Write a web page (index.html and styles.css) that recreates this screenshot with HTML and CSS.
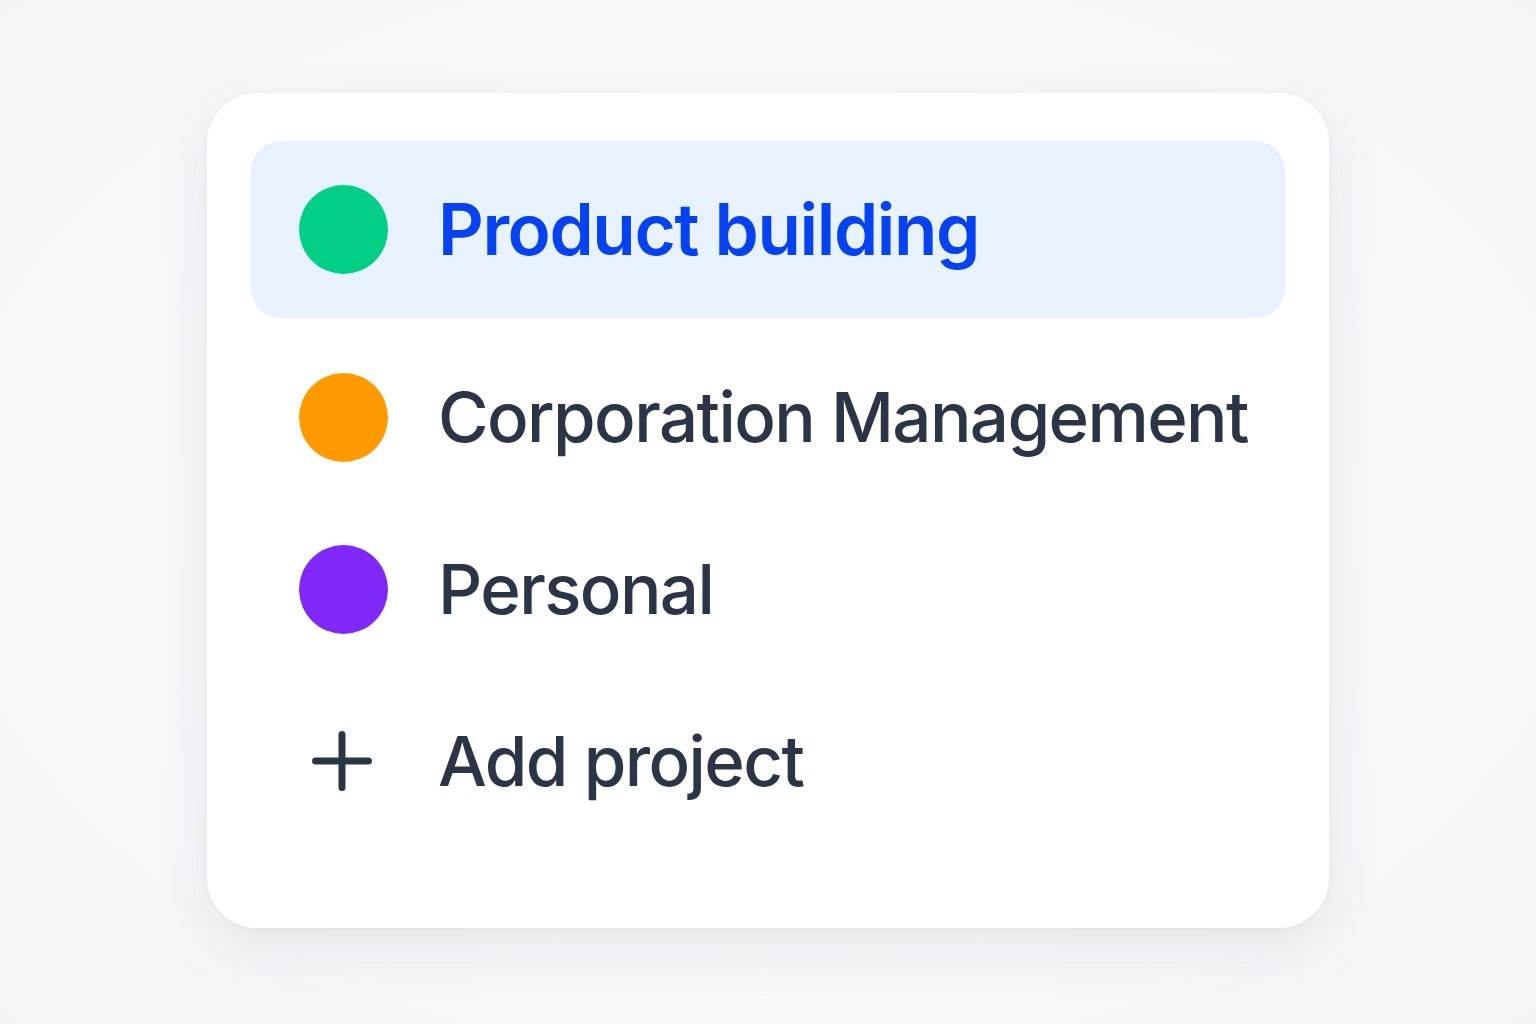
FILE: index.html
```html
<!DOCTYPE html>
<html lang="en">
<head>
  <meta charset="UTF-8" />
  <title>Projects</title>
  <link rel="stylesheet" href="styles.css">
</head>
<body>
  <div class="card">
    <ul class="projects">
      <li class="project active">
        <span class="dot green"></span>
        <span class="name">Product building</span>
      </li>
      <li class="project">
        <span class="dot orange"></span>
        <span class="name">Corporation Management</span>
      </li>
      <li class="project">
        <span class="dot purple"></span>
        <span class="name">Personal</span>
      </li>
      <li class="project add">
        <span class="plus">
          <svg viewBox="0 0 60 60" width="60" height="60">
            <path d="M30 3.5V56.5M3.5 30H56.5" stroke="#2b3545" stroke-width="7" stroke-linecap="round" fill="none"/>
          </svg>
        </span>
        <span class="name">Add project</span>
      </li>
    </ul>
  </div>
</body>
</html>
```

FILE: styles.css
```css
body {
  margin: 0;
  height: 1024px;
  font-family: 'Inter', 'Noto Sans', sans-serif;
  background: radial-gradient(ellipse at center, #fcfcfd 0%, #f7f8fa 70%, #f2f4f6 100%);
  color: #2b3545;
  overflow: hidden;
}

.card {
  margin: 93px 0 0 207px;
  width: 1122px;
  height: 835px;
  box-sizing: border-box;
  padding: 48px 44px;
  background: #fff;
  border-radius: 50px;
  box-shadow: 0 20px 60px rgba(30, 40, 60, 0.08), 0 2px 8px rgba(30, 40, 60, 0.04);
}

.projects {
  list-style: none;
  margin: 0;
  padding: 0;
}

.project {
  display: flex;
  align-items: center;
  height: 172px;
  padding-left: 48px;
  gap: 50px;
  font-size: 69px;
  font-weight: 500;
  letter-spacing: -1.6px;
  white-space: nowrap;
}

.project.active {
  height: 177px;
  margin-bottom: 13px;
  background: #e8f2fd;
  border-radius: 30px;
  color: #0642ef;
  font-size: 71px;
  font-weight: 600;
  letter-spacing: -1.4px;
}

.dot {
  flex: none;
  width: 89px;
  height: 89px;
  border-radius: 50%;
}

.dot.green { background: #00cf85; }
.dot.orange { background: #ff9b00; }
.dot.purple { background: #7f28f8; }

.plus {
  flex: none;
  width: 89px;
  display: flex;
  justify-content: center;
}

.plus svg {
  display: block;
  margin-left: -4px;
}

.name {
  line-height: 1;
}
```
